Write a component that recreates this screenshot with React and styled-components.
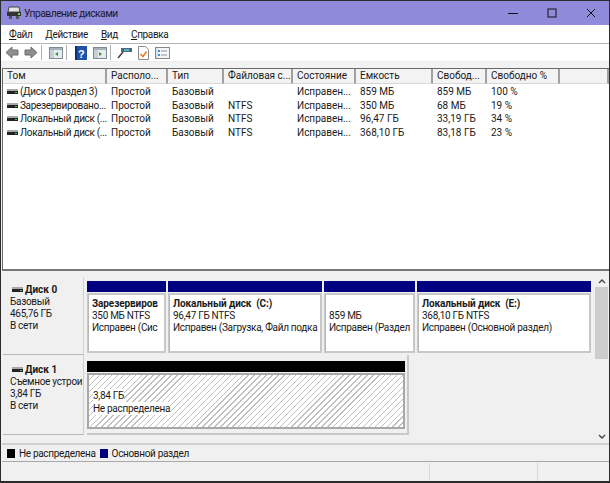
import React from 'react'
import styled, { createGlobalStyle } from 'styled-components'

const Global = createGlobalStyle`
  html, body { margin: 0; padding: 0; background: #f0f0f0; overflow: hidden; }
  body { font-family: Roboto, "Noto Sans", sans-serif; font-size: 10px; color: #1a1a1a; }
`

const Win = styled.div`
  width: 610px;
  height: 483px;
  box-sizing: border-box;
  border: 1px solid #2c2c2c;
  border-width: 1px 1px 2px 1px;
  display: flex;
  flex-direction: column;
  background: #f0f0f0;
  overflow: hidden;
`
const TitleBar = styled.div`
  height: 24px;
  flex: none;
  background: #8f8ad9;
  display: flex;
  align-items: center;
  padding-left: 6px;
  color: #1a1a2e;
  font-size: 10.3px;
  letter-spacing: -0.5px;
  gap: 3px;
`
const TitleText = styled.span`
  flex: 1;
`
const WinButton = styled.div`
  width: 36px;
  height: 24px;
  display: flex;
  align-items: center;
  justify-content: center;
`
const Menu = styled.div`
  height: 18px;
  flex: none;
  background: #fff;
  border-bottom: 1px solid #b4b4b4;
  display: flex;
  align-items: center;
  padding-left: 8px;
  gap: 13px;
  letter-spacing: -0.35px;
`
const MenuItem = styled.span`
  &::first-letter { text-decoration: underline; }
`
const Toolbar = styled.div`
  height: 17px;
  flex: none;
  background: #fff;
  border-bottom: 1px solid #ececec;
  display: flex;
  align-items: center;
  padding-left: 2px;
  gap: 2px;
`
const Tool = styled.div`
  width: 17px;
  height: 15px;
  display: flex;
  align-items: center;
  justify-content: center;
`
const ToolSep = styled.div`
  width: 1px;
  height: 15px;
  background: #b0b0b0;
  margin-right: 3px;
`
const Gap = styled.div`
  height: 6px;
  flex: none;
  background: #f2f2f2;
`
const ListPane = styled.div`
  flex: none;
  height: 203px;
  margin-left: 1px;
  background: #fff;
  border-top: 1px solid #6a6a6a;
  border-left: 1px solid #6a6a6a;
  border-bottom: 2px solid #777;
  box-sizing: border-box;
`
const Cols = '104px 61px 56px 69px 63px 77px 54px 73px 1fr'
const HeadRow = styled.div`
  display: grid;
  grid-template-columns: ${Cols};
  height: 15px;
  margin-bottom: 1px;
`
const HeadCell = styled.div`
  background: #f3f3f3;
  border-right: 2px solid #a0a0a0;
  border-bottom: 1px solid #d8d8d8;
  box-sizing: border-box;
  padding-left: 4px;
  line-height: 14px;
  white-space: nowrap;
  overflow: hidden;
`
const Row = styled.div`
  display: grid;
  grid-template-columns: ${Cols};
  height: 13.75px;
  line-height: 14px;
`
const Cell = styled.div`
  padding-left: 4px;
  white-space: nowrap;
  overflow: hidden;
  display: flex;
  align-items: center;
  gap: 2px;
`
const NameCell = styled(Cell)`
  letter-spacing: -0.32px;
`
const DiskPane = styled.div`
  flex: none;
  height: 174px;
  margin-left: 1px;
  display: flex;
  background: #f0f0f0;
  border-bottom: 2px solid #d0d0d0;
  box-sizing: border-box;
  padding-top: 6px;
  letter-spacing: -0.3px;
`
const DiskList = styled.div`
  flex: 1;
  min-width: 0;
`
const DiskRow = styled.div`
  display: flex;
  height: ${p => p.$h}px;
`
const DiskLabel = styled.div`
  width: 81px;
  flex: none;
  margin-left: 1px;
  background: #f0f0f0;
  border-bottom: 1px solid #b8b8b8;
  border-right: 1px solid #d0d0d0;
  box-sizing: border-box;
  padding: ${p => p.$top}px 0 0 7px;
  line-height: 12px;
  white-space: nowrap;
  overflow: hidden;
`
const DiskName = styled.div`
  font-weight: 700;
  letter-spacing: 0;
  display: flex;
  align-items: center;
  gap: 2px;
  padding-left: 2px;
`
const Volumes = styled.div`
  display: flex;
  gap: 2px;
  margin-left: 3px;
  padding-top: 4px;
  height: 72px;
`
const Volume = styled.div`
  width: ${p => p.$w}px;
  flex: none;
  display: flex;
  flex-direction: column;
`
const VolBar = styled.div`
  height: 11px;
  flex: none;
  background: #000080;
`
const VolBody = styled.div`
  flex: 1;
  margin-top: 1px;
  background: #fff;
  border: 1px solid #c8c8c8;
  border-width: 2px 2px 2px 1px;
  box-shadow: inset 1px 0 0 #b8b8b8;
  padding: 3px 0 0 4px;
  box-sizing: border-box;
  line-height: 12px;
  white-space: nowrap;
  overflow: hidden;
`
const VolName = styled.div`
  font-weight: 700;
  letter-spacing: -0.1px;
  white-space: pre;
  min-height: 12px;
`
const FreeWrap = styled.div`
  width: 322px;
  flex: none;
  margin-left: 3px;
  padding: 6px 2px 4px 0;
  box-sizing: border-box;
  background: #f0f0f0;
  border-right: 2px solid #c8c8c8;
  border-bottom: 2px solid #c8c8c8;
  display: flex;
  flex-direction: column;
`
const FreeBar = styled.div`
  height: 11px;
  flex: none;
  background: #000;
`
const FreeBody = styled.div`
  flex: 1;
  margin-top: 1px;
  border: 2px solid #a8a8a8;
  padding: 14px 0 0 4px;
  line-height: 13px;
  box-sizing: border-box;
  background: repeating-linear-gradient(135deg, #fff 0, #fff 3.2px, #c0c0c0 3.2px, #c0c0c0 4.2px);
`
const FreeText = styled.div`
  background: #fff;
  width: fit-content;
`
const Scroll = styled.div`
  width: 13px;
  flex: none;
  margin: -3px 1px 0 0;
  background: #f0f0f0;
  display: flex;
  flex-direction: column;
  align-items: center;
`
const Arrow = styled.div`
  height: 13px;
  display: flex;
  align-items: center;
`
const Thumb = styled.div`
  width: 100%;
  height: 72px;
  background: #cdcdcd;
`
const ScrollFill = styled.div`
  flex: 1;
`
const Legend = styled.div`
  height: 16px;
  flex: none;
  margin-left: 1px;
  display: flex;
  align-items: center;
  padding-left: 5px;
  background: #f0f0f0;
  border-bottom: 1px solid #a8a8a8;
  letter-spacing: -0.33px;
`
const Swatch = styled.span`
  width: 8px;
  height: 9px;
  background: ${p => p.$c};
  margin-right: 4px;
`
const LegendText = styled.span`
  margin-right: 4px;
`
const Status = styled.div`
  flex: 1;
  margin-top: 1px;
  display: flex;
  justify-content: flex-end;
  background: #f0f0f0;
`
const StatusCell = styled.div`
  width: ${p => p.$w}px;
  border-left: 1px solid #d8d8d8;
`

const DiskIcon = () => (
  <svg width="11" height="6" viewBox="0 0 11 6" style={{ flex: 'none' }}>
    <rect x="0" y="0" width="11" height="2" fill="#a8a8a8" />
    <rect x="0" y="2" width="11" height="3" fill="#222" />
    <rect x="8" y="3" width="2" height="1" fill="#5ac85a" />
  </svg>
)
const BackIcon = ({ flip }) => (
  <svg width="14" height="13" viewBox="0 0 14 13" style={flip ? { transform: 'scaleX(-1)' } : undefined}>
    <path d="M1 6.5 7 1v3h6v5H7v3z" fill="#8e8e8e" stroke="#6f6f6f" />
  </svg>
)
const PaneIcon = ({ color, flip }) => (
  <svg width="14" height="13" viewBox="0 0 14 13">
    <rect x="0.5" y="1.5" width="13" height="11" fill="#e6ecef" stroke="#7f8b93" />
    <rect x="1" y="2" width="12" height="2" fill="#a6b3bb" />
    <rect x="1" y="4" width="4" height="8" fill="#c8d0d6" />
    <path d={flip ? 'M6 6v4l3-2z' : 'M9 6v4L6 8z'} fill={color} />
  </svg>
)
const HelpIcon = () => (
  <svg width="12" height="14" viewBox="0 0 12 14">
    <rect width="12" height="14" fill="#1c52a8" />
    <rect x="0" y="0" width="2" height="14" fill="#0e2f70" />
    <text x="3" y="11.5" fontSize="11" fontWeight="700" fill="#fff" fontFamily="Liberation Sans">?</text>
  </svg>
)
const ProbeIcon = () => (
  <svg width="16" height="13" viewBox="0 0 16 13">
    <path d="M4 2h11v4H4z" fill="#5a646e" />
    <rect x="7" y="3" width="5" height="2" fill="#48b4d8" />
    <path d="M6 6 1 12" stroke="#444" strokeWidth="1.5" />
  </svg>
)
const CheckDoc = () => (
  <svg width="11" height="14" viewBox="0 0 11 14">
    <path d="M.5.5h7l3 3v10H.5z" fill="#fff" stroke="#8a8a8a" />
    <path d="M2.5 8 5 10.5 8.5 5.5" fill="none" stroke="#e87a1e" strokeWidth="1.5" />
  </svg>
)
const ListIcon = () => (
  <svg width="15" height="12" viewBox="0 0 15 12">
    <rect x="0.5" y="0.5" width="14" height="11" fill="#f4f6f8" stroke="#7f8b93" />
    <rect x="3" y="3" width="2" height="2" fill="#3a8fd0" />
    <rect x="3" y="7" width="2" height="2" fill="#3a8fd0" />
    <path d="M6 4h6M6 8h6" stroke="#8a949c" />
    <path d="M2 1v10" stroke="#c4ccd2" />
  </svg>
)
const AppIcon = () => (
  <svg width="14" height="14" viewBox="0 0 14 14">
    <path d="M2 1h10l1 5H1z" fill="#e4e4e4" stroke="#444" />
    <rect x="0" y="6" width="14" height="4" fill="#333" />
    <rect x="2" y="10" width="3" height="3" fill="#555" />
    <rect x="9" y="10" width="3" height="3" fill="#555" />
    <rect x="11" y="7" width="2" height="2" fill="#6ccf6c" />
  </svg>
)

const headers = ['Том', 'Располо...', 'Тип', 'Файловая с...', 'Состояние', 'Емкость', 'Свобод...', 'Свободно %', '']
const rows = [
  ['(Диск 0 раздел 3)', 'Простой', 'Базовый', '', 'Исправен...', '859 МБ', '859 МБ', '100 %'],
  ['Зарезервировано...', 'Простой', 'Базовый', 'NTFS', 'Исправен...', '350 МБ', '68 МБ', '19 %'],
  ['Локальный диск (...', 'Простой', 'Базовый', 'NTFS', 'Исправен...', '96,47 ГБ', '33,19 ГБ', '34 %'],
  ['Локальный диск (...', 'Простой', 'Базовый', 'NTFS', 'Исправен...', '368,10 ГБ', '83,18 ГБ', '23 %'],
]
const volumes = [
  { w: 79, name: 'Зарезервиров', size: '350 МБ NTFS', state: 'Исправен (Сис' },
  { w: 154, name: 'Локальный диск  (C:)', size: '96,47 ГБ NTFS', state: 'Исправен (Загрузка, Файл подка' },
  { w: 91, name: '', size: '859 МБ', state: 'Исправен (Раздел' },
  { w: 174, name: 'Локальный диск  (E:)', size: '368,10 ГБ NTFS', state: 'Исправен (Основной раздел)' },
]

export default function App() {
  return (
    <Win>
      <Global />
      <TitleBar>
        <AppIcon />
        <TitleText>Управление дисками</TitleText>
        <WinButton>
          <svg width="10" height="10"><path d="M0 5.5h10" stroke="#111" /></svg>
        </WinButton>
        <WinButton>
          <svg width="10" height="10"><rect x="1" y="1" width="8" height="8" fill="none" stroke="#111" /></svg>
        </WinButton>
        <WinButton>
          <svg width="10" height="10"><path d="M1 1l8 8M9 1l-8 8" stroke="#111" /></svg>
        </WinButton>
      </TitleBar>
      <Menu>
        <MenuItem>Файл</MenuItem>
        <MenuItem>Действие</MenuItem>
        <MenuItem>Вид</MenuItem>
        <MenuItem>Справка</MenuItem>
      </Menu>
      <Toolbar>
        <Tool><BackIcon /></Tool>
        <Tool><BackIcon flip /></Tool>
        <ToolSep />
        <Tool><PaneIcon color="#2aa02a" /></Tool>
        <ToolSep />
        <Tool><HelpIcon /></Tool>
        <Tool><PaneIcon color="#2aa02a" flip /></Tool>
        <ToolSep />
        <Tool><ProbeIcon /></Tool>
        <Tool><CheckDoc /></Tool>
        <Tool><ListIcon /></Tool>
      </Toolbar>
      <Gap />
      <ListPane>
        <HeadRow>
          {headers.map((h, i) => <HeadCell key={i}>{h}</HeadCell>)}
        </HeadRow>
        {rows.map((r, i) => (
          <Row key={i}>
            {r.map((c, j) => (
              j === 0
                ? <NameCell key={j}><DiskIcon />{c}</NameCell>
                : <Cell key={j}>{c}</Cell>
            ))}
          </Row>
        ))}
      </ListPane>
      <DiskPane>
        <DiskList>
          <DiskRow $h={78}>
            <DiskLabel $top={7}>
              <DiskName><DiskIcon />Диск 0</DiskName>
              <div>Базовый</div>
              <div>465,76 ГБ</div>
              <div>В сети</div>
            </DiskLabel>
            <Volumes>
              {volumes.map((v, i) => (
                <Volume key={i} $w={v.w}>
                  <VolBar />
                  <VolBody>
                    <VolName>{v.name}</VolName>
                    <div>{v.size}</div>
                    <div>{v.state}</div>
                  </VolBody>
                </Volume>
              ))}
            </Volumes>
          </DiskRow>
          <DiskRow $h={80}>
            <DiskLabel $top={9}>
              <DiskName><DiskIcon />Диск 1</DiskName>
              <div>Съемное устрои</div>
              <div>3,84 ГБ</div>
              <div>В сети</div>
            </DiskLabel>
            <FreeWrap>
              <FreeBar />
              <FreeBody>
                <FreeText>3,84 ГБ</FreeText>
                <FreeText>Не распределена</FreeText>
              </FreeBody>
            </FreeWrap>
          </DiskRow>
        </DiskList>
        <Scroll>
          <Arrow><svg width="8" height="6"><path d="M1 5l3-3 3 3" fill="none" stroke="#444" strokeWidth="1.4" /></svg></Arrow>
          <Thumb />
          <ScrollFill />
          <Arrow><svg width="8" height="6"><path d="M1 1l3 3 3-3" fill="none" stroke="#444" strokeWidth="1.4" /></svg></Arrow>
        </Scroll>
      </DiskPane>
      <Legend>
        <Swatch $c="#000" />
        <LegendText>Не распределена</LegendText>
        <Swatch $c="#000080" />
        <LegendText>Основной раздел</LegendText>
      </Legend>
      <Status>
        <StatusCell $w={107} />
        <StatusCell $w={71} />
      </Status>
    </Win>
  )
}
